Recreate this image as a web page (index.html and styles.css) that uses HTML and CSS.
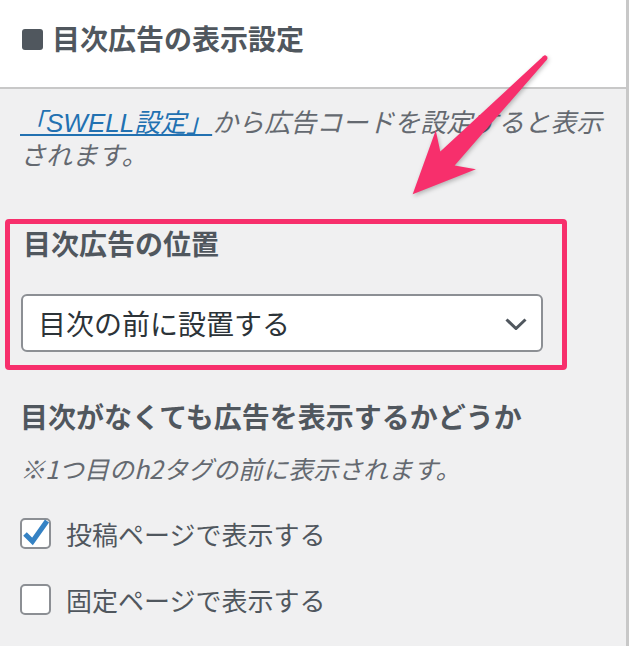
FILE: index.html
```html
<!doctype html>
<html lang="ja">
    <head>
        <meta charset="UTF-8" />
        <meta name="viewport" content="width=device-width, initial-scale=1.0" />
        <title>目次広告の表示設定</title>
        <link rel="stylesheet" href="styles.css">
    </head>
    <body>
        <div class="panel">
            <h2 class="panel-title"><span class="title-mark"></span>目次広告の表示設定</h2>

            <div class="panel-body">
                <p class="description"><a href="#">「SWELL設定」</a>から広告コードを設定すると表示<br>されます。</p>

                <div class="highlight">
                    <p class="field-label inner">目次広告の位置</p>
                    <div class="select-box">
                        <span>目次の前に設置する</span>
                        <svg class="chevron" width="22" height="12" viewBox="0 0 22 12">
                            <polyline points="1.5,1.5 11,10.5 20.5,1.5" fill="none" stroke="#50575e" stroke-width="3" />
                        </svg>
                    </div>
                </div>

                <p class="field-label">目次がなくても広告を表示するかどうか</p>
                <p class="note">※1つ目のh2タグの前に表示されます。</p>

                <label class="check-row">
                    <span class="checkbox">
                        <svg width="31" height="31" viewBox="0 0 31 31">
                            <polyline points="5,16 12.5,23.5 27,3" fill="none" stroke="#3582c4" stroke-width="5" />
                        </svg>
                    </span>
                    投稿ページで表示する
                </label>
                <label class="check-row second">
                    <span class="checkbox"></span>
                    固定ページで表示する
                </label>
            </div>

            <!-- annotation arrow -->
            <svg class="arrow" width="630" height="646" viewBox="0 0 630 646">
                <g transform="translate(545 58) rotate(134.15)" fill="#f72f6c">
                    <circle cx="0" cy="0" r="2.5" />
                    <polygon points="0,-2.5 140,-10 128,-28 190,0 128,28 140,10 0,2.5" />
                </g>
            </svg>
        </div>
    </body>
</html>
```

FILE: styles.css
```css
body {
    margin: 0;
    background-color: #fff;
    font-family: "Noto Sans CJK JP", "Noto Sans", sans-serif;
}
.panel {
    position: relative;
    box-sizing: border-box;
    width: 629px;
    min-height: 646px;
    background-color: #f0f0f1;
    border-right: 3px solid #c8c8c8;
    overflow: hidden;
}
.panel-title {
    display: flex;
    align-items: center;
    gap: 9px;
    margin: 0;
    padding: 18px 0 29px 22px;
    font-size: 28px;
    line-height: 40px;
    font-weight: bold;
    color: #50575e;
    background-color: #fff;
    border-bottom: 2px solid #c8c8c8;
}
.title-mark {
    width: 21px;
    height: 21px;
    margin-top: 3px;
    background-color: #50575e;
    border-radius: 3px;
}
.panel-body {
    padding: 16px 20px 0 20px;
}
.description {
    margin: 0;
    padding-top: 2px;
    font-family: "Liberation Sans", "Noto Sans CJK JP", sans-serif;
    font-size: 26px;
    line-height: 33px;
    font-style: italic;
    color: #646970;
}
.description a {
    color: #2271b1;
    text-decoration: underline;
}
.highlight {
    margin: 46px 39px 0 -15px;
    padding: 0 19px 13px 11px;
    border: 5px solid #f72f6c;
    border-radius: 4px;
}
.field-label {
    margin: 27px 0 0;
    font-size: 28px;
    line-height: 38px;
    font-weight: bold;
    color: #50575e;
}
.field-label.inner {
    margin: 0 0 32px;
    padding-left: 2px;
}
.select-box {
    box-sizing: border-box;
    display: flex;
    align-items: center;
    justify-content: space-between;
    height: 58px;
    padding: 0 14px 0 15px;
    background-color: #fff;
    border: 2px solid #8c8f94;
    border-radius: 6px;
    font-size: 28px;
    color: #2c3338;
}
.chevron {
    margin-top: 2px;
}
.note {
    margin: 17px 0 0;
    font-size: 25px;
    line-height: 32px;
    font-style: italic;
    color: #646970;
}
.check-row {
    display: flex;
    align-items: center;
    gap: 15px;
    height: 40px;
    margin-top: 29px;
    font-size: 26px;
    color: #50575e;
}
.check-row.second {
    margin-top: 26px;
}
.checkbox {
    box-sizing: border-box;
    position: relative;
    width: 31px;
    height: 31px;
    background-color: #fff;
    border: 2px solid #8c8f94;
    border-radius: 5px;
}
.checkbox svg {
    position: absolute;
    left: -2px;
    top: -2px;
}
.arrow {
    position: absolute;
    left: 0;
    top: 0;
    pointer-events: none;
    filter: drop-shadow(1px 2px 2px rgba(0, 0, 0, 0.25));
}
```
